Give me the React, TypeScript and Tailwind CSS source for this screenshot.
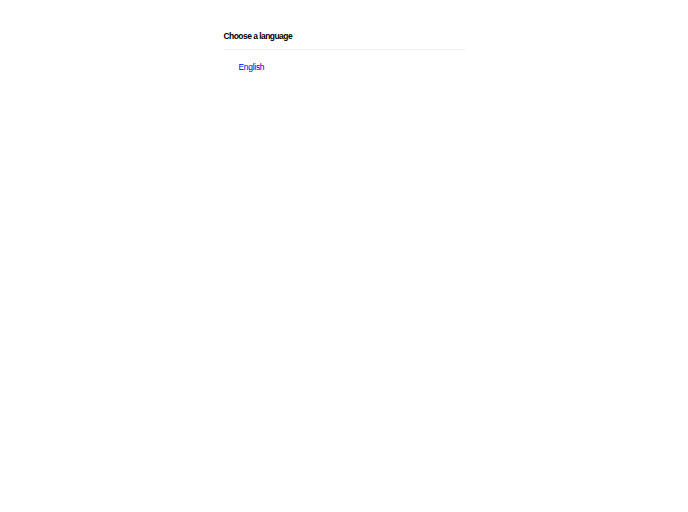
export default function App() {
  return (
    <div className="min-h-screen bg-white font-['Liberation_Sans',Arial,sans-serif]">
      <div className="mx-auto w-[241px] pt-[30px]">
        <h1 className="text-[8.5px] font-bold leading-[12px] tracking-[-0.55px] text-black">
          Choose a language
        </h1>
        <div className="mt-[7px] h-px bg-[#f0f0f0]" />
        <ul className="pl-[15px] pt-[11px] text-[8.5px] leading-[12px]">
          <li>
            <a href="#" className="tracking-[-0.3px] text-[#0000ee]">
              English
            </a>
          </li>
        </ul>
      </div>
    </div>
  );
}
